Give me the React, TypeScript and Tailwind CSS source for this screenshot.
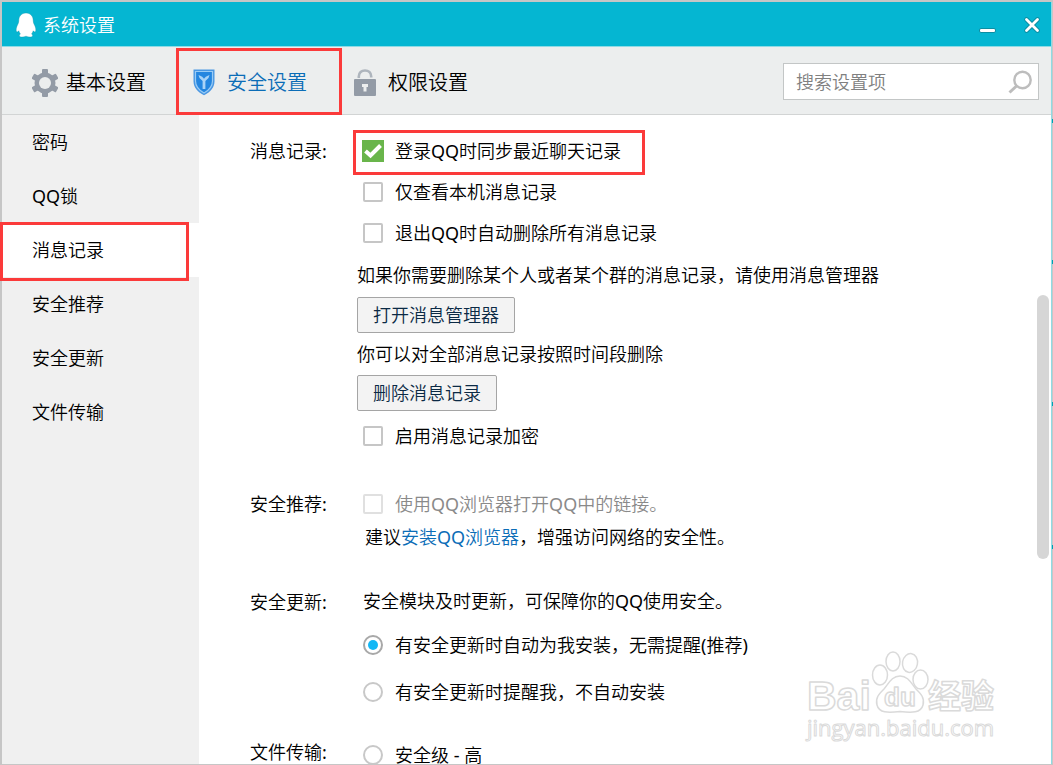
import { useState } from "react";
import type { ReactNode } from "react";

const navItems = ["密码", "QQ锁", "消息记录", "安全推荐", "安全更新", "文件传输"];

function PenguinIcon() {
  return (
    <svg width="22" height="26" viewBox="0 0 22 26" className="shrink-0">
      <path
        d="M11 1C6.6 1 3.8 4.300 3.800 8.500C3.800 10.500 3.300 11.500 2.400 13.200C1.300 15.400 .8 18.200 1.500 19.600C2 20.500 3 19.800 3.800 18.800C4.200 20.300 4.700 21.200 5.400 22C3.700 23.200 4 25 6.800 25C8.500 25 10 24.700 11 24.200C12 24.700 13.500 25 15.200 25C18 25 18.300 23.200 16.600 22C17.300 21.200 17.800 20.300 18.200 18.800C19 19.800 20 20.500 20.500 19.600C21.200 18.200 20.700 15.400 19.600 13.200C18.700 11.500 18.200 10.500 18.200 8.500C18.200 4.300 15.400 1 11 1Z"
        fill="#fff"
        stroke="#0a8ea3"
        strokeOpacity=".35"
      />
    </svg>
  );
}

function GearIcon() {
  return (
    <svg width="26" height="28" viewBox="0 0 26 28" className="shrink-0" fill="#939ba6">
      <g>
        <rect x="10" y="0" width="6" height="28" rx="1" />
        <rect x="10" y="0" width="6" height="28" rx="1" transform="rotate(60 13 14)" />
        <rect x="10" y="0" width="6" height="28" rx="1" transform="rotate(120 13 14)" />
        <circle cx="13" cy="14" r="10.500" />
      </g>
      <circle cx="13" cy="14" r="6" fill="#eceeee" />
    </svg>
  );
}

function ShieldIcon() {
  return (
    <svg width="22" height="27" viewBox="0 0 22 27" className="shrink-0">
      <path d="M.5 .5H21.500V12C21.500 19 17 23 11 26.300C5 23 .5 19 .5 12Z" fill="#4a97e2" />
      <path d="M2.500 2.500H19.500V12C19.500 17.800 16 21.200 11 24C6 21.200 2.500 17.800 2.500 12Z" fill="#2486e0" stroke="#9accf5" strokeWidth="1.200" />
      <path d="M5.500 6L11 8.500L16.500 6L15.500 9L12.400 12V20H9.600V12L6.500 9Z" fill="#a9d3f7" />
      <path d="M8.500 7L11 9.800L13.500 7L11 8.200Z" fill="#2486e0" />
    </svg>
  );
}

function LockIcon() {
  return (
    <svg width="22" height="27" viewBox="0 0 22 27" className="shrink-0">
      <path d="M4.800 9V7.500C4.800 3.500 7.500 1.500 11 1.500C14.500 1.500 17.200 3.500 17.200 7.500V8.500" fill="none" stroke="#aeb5bd" strokeWidth="2.600" />
      <rect x="0" y="10" width="22" height="17" rx="1" fill="#939ba6" />
      <path d="M8 15H14V18H12.500V22.500H9.500V18H8Z" fill="#eceeee" />
    </svg>
  );
}

function Watermark() {
  return (
    <svg
      width="200"
      height="100"
      viewBox="0 0 200 100"
      className="pointer-events-none absolute right-12 bottom-4"
      fill="#fff"
      stroke="#dadada"
      strokeWidth="1.500"
      strokeLinejoin="round"
      fontFamily="'Liberation Sans', 'Noto Sans CJK SC', sans-serif"
      fontWeight="bold"
    >
      <text x="4" y="62" fontSize="41">Bai</text>
      <ellipse cx="77" cy="27" rx="7.500" ry="10" />
      <ellipse cx="90" cy="13.500" rx="7" ry="9.500" />
      <ellipse cx="107" cy="15" rx="7.500" ry="9.500" transform="rotate(10 107 15)" />
      <ellipse cx="117.500" cy="31.500" rx="7.500" ry="9.500" />
      <path d="M97 28C89 28 86 35 81 41C76 46 72 50 74 57C76 65 85 65 97 63.500C109 65 118 65 120 57C122 50 118 46 113 41C108 35 105 28 97 28Z" />
      <text x="81" y="58" fontSize="26">du</text>
      <text x="125" y="60" fontSize="33">经验</text>
      <text x="4" y="88" fontSize="22" fontWeight="500" strokeWidth="1" fontFamily="'Open Sans', sans-serif">jingyan.baidu.com</text>
    </svg>
  );
}

interface TickBoxProps {
  label: string;
  initial?: boolean;
  disabled?: boolean;
}

function TickBox({ label, initial = false, disabled = false }: TickBoxProps) {
  const [checked, setChecked] = useState(initial);
  return (
    <label className={`flex h-[41px] items-center gap-3 pl-1.5 ${disabled ? "text-[#8a8a8a]" : ""}`}>
      <span className="relative flex size-5">
        <input
          type="checkbox"
          checked={checked}
          disabled={disabled}
          onChange={(e) => setChecked(e.target.checked)}
          className="size-5 appearance-none rounded-xs border-2 border-[#c6c6c6] bg-white checked:rounded-none checked:border-[#69b54b] checked:bg-[#69b54b] checked:outline checked:outline-[#69b54b] disabled:border-[#e0e0e0]"
        />
        {checked && (
          <svg viewBox="0 0 20 20" className="pointer-events-none absolute inset-0" fill="none" stroke="#fff" strokeWidth="4">
            <path d="M2.500 10L7.500 14.500L17.500 4.500" />
          </svg>
        )}
      </span>
      {label}
    </label>
  );
}

interface RadioProps {
  name: string;
  label: string;
  initial?: boolean;
}

function Radio({ name, label, initial }: RadioProps) {
  return (
    <label className="flex h-[47px] items-center gap-3 pl-1.5">
      <input
        type="radio"
        name={name}
        defaultChecked={initial}
        className="size-5 appearance-none rounded-full border-2 border-[#c8c8c8] bg-white checked:border-[#a8a8a8] checked:bg-[#12b7f5] checked:bg-clip-content checked:p-[3px]"
      />
      {label}
    </label>
  );
}

function Section({ title, className, children }: { title: string; className?: string; children: ReactNode }) {
  return (
    <section className={`flex ${className ?? ""}`}>
      <h2 className="flex h-[41px] w-[107px] shrink-0 items-center">{title}</h2>
      <div>{children}</div>
    </section>
  );
}

// red frame drawn over the highlighted item
function Mark({ className }: { className: string }) {
  return <span className={`pointer-events-none absolute z-10 border-3 border-[#fb3a3a] ${className}`} />;
}

const buttonClass = "block h-9 rounded-xs border border-[#a5a5a5] bg-[#f3f3f3] px-[15px] text-[#0b2a45]";

export default function App() {
  const [active, setActive] = useState("消息记录");

  return (
    <div className="relative h-screen overflow-hidden bg-[#c6c6c6] pt-0.5 pr-px pb-px pl-0.5 font-['Noto_Sans','Noto_Sans_CJK_SC_DemiLight','Noto_Sans_CJK_SC',sans-serif] text-lg leading-6 font-normal text-black">
      {/* strip of the window behind */}
      <span className="absolute top-[119px] right-0 h-1 w-px bg-[#00a0b0]" />
      <span className="absolute top-[260px] right-0 h-1 w-px bg-[#00a0b0]" />
      <span className="absolute top-[402px] right-0 h-1 w-px bg-[#00a0b0]" />
      <span className="absolute top-[545px] right-0 h-1 w-px bg-[#00a0b0]" />

      <div className="flex h-full flex-col border-r border-[#8fdbe5] bg-white">
        <header className="flex h-[45px] shrink-0 items-center border-b border-[#8fdbe5] bg-[#05b6d2] pt-0.5 pr-[9px] pl-[13px] text-white">
          <PenguinIcon />
          <h1 className="ml-1.5">系统设置</h1>
          <div className="ml-auto flex items-center gap-6">
            <button aria-label="最小化" className="flex h-6 w-5 items-center">
              <svg width="20" height="24" viewBox="0 0 20 24">
                <rect x="1.500" y="15.500" width="16" height="4" rx="1.500" fill="#fff" stroke="#0a8ea3" />
              </svg>
            </button>
            <button aria-label="关闭" className="flex size-5 items-center">
              <svg width="20" height="20" viewBox="0 0 20 20" strokeLinecap="round">
                <path d="M4.500 4.500L15.500 15.500M15.500 4.500L4.500 15.500" stroke="#0a8ea3" strokeWidth="4.600" />
                <path d="M4.500 4.500L15.500 15.500M15.500 4.500L4.500 15.500" stroke="#fff" strokeWidth="2.800" />
              </svg>
            </button>
          </div>
        </header>

        <div className="flex h-17 shrink-0 items-center border-b border-[#d2d4d4] bg-[#eceeee] pr-3">
          <nav className="flex h-full text-xl">
            <button className="flex w-[174px] items-center gap-2 pt-1 pl-[30px]">
              <GearIcon />
              基本设置
            </button>
            <button className="relative flex w-[166px] items-center gap-3 pt-1 pl-[17px] text-[#0b6db7]">
              <ShieldIcon />
              安全设置
              <Mark className="inset-x-0 top-px -bottom-px" />
            </button>
            <button className="flex items-center gap-3 pt-1 pl-3">
              <LockIcon />
              权限设置
            </button>
          </nav>
          <div className="mt-0.5 ml-auto flex h-[37px] w-64 items-center border border-[#c3c6c6] bg-white pr-1 pl-3">
            <input
              type="text"
              aria-label="搜索设置项"
              placeholder="搜索设置项"
              className="min-w-0 flex-1 outline-none placeholder:text-[#808080]"
            />
            <button aria-label="搜索" className="flex">
              <svg width="26" height="26" viewBox="0 0 26 26" fill="none" stroke="#bdbdbd">
                <circle cx="14.500" cy="11" r="8.200" strokeWidth="2.400" />
                <path d="M8.500 17L1.500 23.500" strokeWidth="3" />
              </svg>
            </button>
          </div>
        </div>

        <div className="relative flex min-h-0 flex-1">
          <aside className="w-[197px] shrink-0 bg-[#f0f0f0]">
            <ul>
              {navItems.map((item) => (
                <li key={item} className="relative">
                  <button
                    onClick={() => setActive(item)}
                    className={`h-[54px] w-full pl-[30px] text-left ${item === active ? "bg-white" : ""}`}
                  >
                    {item}
                  </button>
                  {item === active && <Mark className="-top-px right-2.5 -bottom-1 -left-0.5" />}
                </li>
              ))}
            </ul>
          </aside>

          <main className="min-w-0 flex-1 overflow-hidden pt-[15px] pl-[51px]">
            <Section title="消息记录:">
              <div className="relative w-fit pr-6">
                <TickBox label="登录QQ时同步最近聊天记录" initial />
                <Mark className="top-0 right-0 -bottom-1 -left-1" />
              </div>
              <TickBox label="仅查看本机消息记录" />
              <TickBox label="退出QQ时自动删除所有消息记录" />
              <p className="flex h-11 items-center">如果你需要删除某个人或者某个群的消息记录，请使用消息管理器</p>
              <button className={buttonClass}>打开消息管理器</button>
              <p className="flex h-[42px] items-center">你可以对全部消息记录按照时间段删除</p>
              <button className={buttonClass}>删除消息记录</button>
              <div className="pt-1">
                <TickBox label="启用消息记录加密" />
              </div>
            </Section>

            <Section title="安全推荐:" className="mt-[27px]">
              <TickBox label="使用QQ浏览器打开QQ中的链接。" disabled />
              <p className="pt-px pl-2">
                建议
                <a href="#browser" className="text-[#0b6db7]">安装QQ浏览器</a>
                ，增强访问网络的安全性。
              </p>
            </Section>

            <Section title="安全更新:" className="mt-8">
              <p className="flex h-10 items-center pl-1.5">安全模块及时更新，可保障你的QQ使用安全。</p>
              <Radio name="update" label="有安全更新时自动为我安装，无需提醒(推荐)" initial />
              <Radio name="update" label="有安全更新时提醒我，不自动安装" />
            </Section>

            <Section title="文件传输:" className="mt-4">
              <Radio name="transfer" label="安全级 - 高" />
            </Section>
          </main>

          {/* scrollbar thumb */}
          <div className="absolute top-[180px] right-0.5 h-[264px] w-3 rounded-full bg-[#d6d6d6]" />
          <Watermark />
        </div>
      </div>
    </div>
  );
}
